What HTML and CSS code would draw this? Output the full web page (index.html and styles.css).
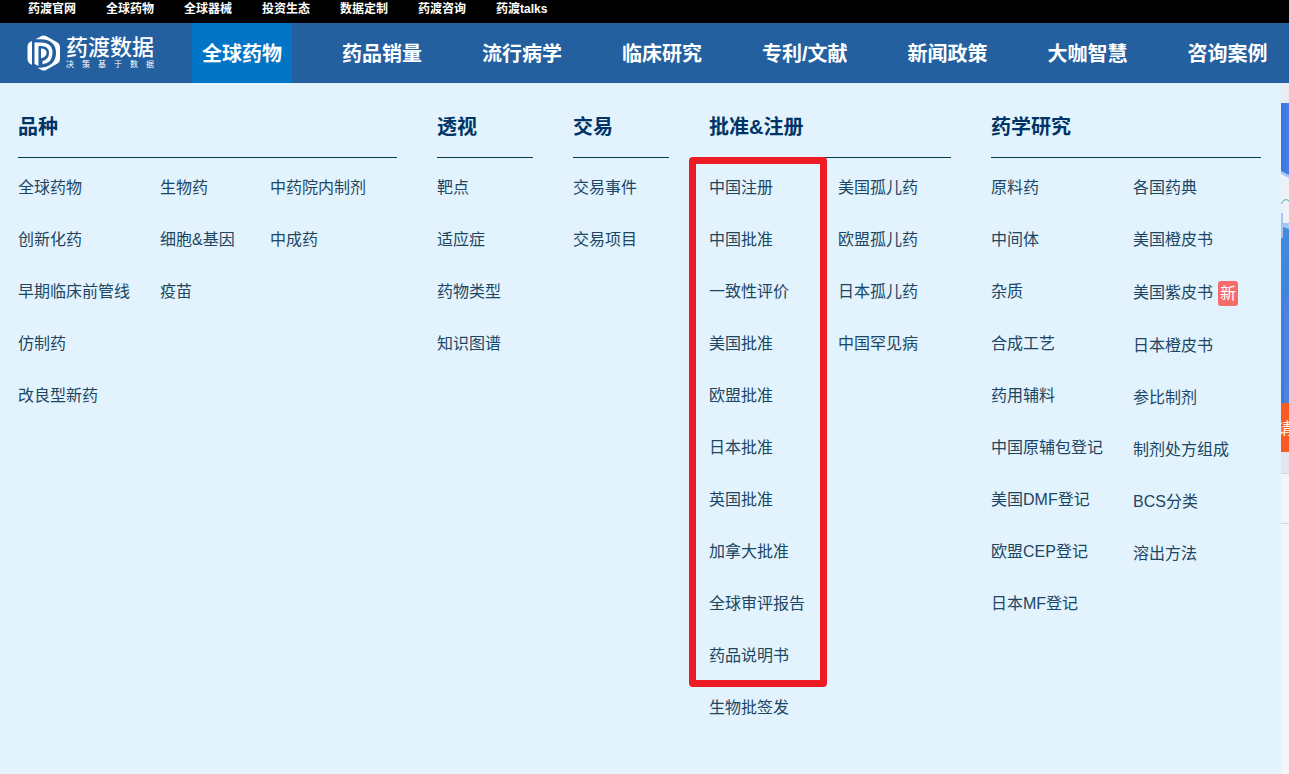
FILE: index.html
```html
<!DOCTYPE html>
<html lang="zh-CN">
<head>
<meta charset="utf-8">
<title>药渡数据</title>
<link rel="stylesheet" href="styles.css">
</head>
<body>
<nav class="topbar" aria-label="站点">
  <a href="#">药渡官网</a>
  <a href="#">全球药物</a>
  <a href="#">全球器械</a>
  <a href="#">投资生态</a>
  <a href="#">数据定制</a>
  <a href="#">药渡咨询</a>
  <a href="#">药渡talks</a>
</nav>
<header class="header">
  <a class="logo" href="#">
    <svg class="logo-mark" viewBox="0 0 34 36" aria-hidden="true">
      <path fill="#fff" d="M5 6V30L2 28Q.5 26.500 .5 24V11.500Q.5 8.500 2.500 7.300Z"/>
      <path fill="#fff" d="M8.500 4.300 15 .7Q17 0 19 1L30.500 7.600Q33 9 33 12V24Q33 27 30.500 28.500L18.500 35.300Q16.500 36 14.500 35L10.500 32.700Q20 33 25 28.500Q29 24.500 29 18Q29 11 24.500 7.500Q20 4 13 4.300Z"/>
      <path fill="#fff" d="M7.500 7.500H14Q25.500 7.500 25.500 18Q25.500 28 15.500 29.300V26Q22 24.500 22 18Q22 11 14 11H11.500V31L7.500 29Z"/>
      <path fill="#fff" d="M14 13.500Q19.500 13.500 19.500 18Q19.500 22 14 23.200Z"/>
    </svg>
    <span class="logo-text">
      <span class="logo-name">药渡数据</span>
      <span class="logo-slogan"><span>决</span><span>策</span><span>基</span><span>于</span><span>数</span><span>据</span></span>
    </span>
  </a>
  <nav class="main-nav" aria-label="主导航">
    <a class="active" href="#">全球药物</a>
    <a href="#">药品销量</a>
    <a href="#">流行病学</a>
    <a href="#">临床研究</a>
    <a href="#">专利/文献</a>
    <a href="#">新闻政策</a>
    <a href="#">大咖智慧</a>
    <a href="#">咨询案例</a>
  </nav>
</header>
<main class="content">
  <div class="menu">
    <section>
      <h2>品种</h2>
      <div class="lists lists-variety">
        <ul>
          <li><a href="#">全球药物</a></li>
          <li><a href="#">创新化药</a></li>
          <li><a href="#">早期临床前管线</a></li>
          <li><a href="#">仿制药</a></li>
          <li><a href="#">改良型新药</a></li>
        </ul>
        <ul>
          <li><a href="#">生物药</a></li>
          <li><a href="#">细胞&amp;基因</a></li>
          <li><a href="#">疫苗</a></li>
        </ul>
        <ul>
          <li><a href="#">中药院内制剂</a></li>
          <li><a href="#">中成药</a></li>
        </ul>
      </div>
    </section>
    <section>
      <h2>透视</h2>
      <ul class="lists">
        <li><a href="#">靶点</a></li>
        <li><a href="#">适应症</a></li>
        <li><a href="#">药物类型</a></li>
        <li><a href="#">知识图谱</a></li>
      </ul>
    </section>
    <section>
      <h2>交易</h2>
      <ul class="lists">
        <li><a href="#">交易事件</a></li>
        <li><a href="#">交易项目</a></li>
      </ul>
    </section>
    <section>
      <h2>批准&amp;注册</h2>
      <div class="lists lists-approval">
        <div>
          <ul class="marked">
            <li><a href="#">中国注册</a></li>
            <li><a href="#">中国批准</a></li>
            <li><a href="#">一致性评价</a></li>
            <li><a href="#">美国批准</a></li>
            <li><a href="#">欧盟批准</a></li>
            <li><a href="#">日本批准</a></li>
            <li><a href="#">英国批准</a></li>
            <li><a href="#">加拿大批准</a></li>
            <li><a href="#">全球审评报告</a></li>
            <li><a href="#">药品说明书</a></li>
          </ul>
          <ul>
            <li><a href="#">生物批签发</a></li>
          </ul>
        </div>
        <ul>
          <li><a href="#">美国孤儿药</a></li>
          <li><a href="#">欧盟孤儿药</a></li>
          <li><a href="#">日本孤儿药</a></li>
          <li><a href="#">中国罕见病</a></li>
        </ul>
      </div>
    </section>
    <section>
      <h2>药学研究</h2>
      <div class="lists lists-research">
        <ul>
          <li><a href="#">原料药</a></li>
          <li><a href="#">中间体</a></li>
          <li><a href="#">杂质</a></li>
          <li><a href="#">合成工艺</a></li>
          <li><a href="#">药用辅料</a></li>
          <li><a href="#">中国原辅包登记</a></li>
          <li><a href="#">美国DMF登记</a></li>
          <li><a href="#">欧盟CEP登记</a></li>
          <li><a href="#">日本MF登记</a></li>
        </ul>
        <ul>
          <li><a href="#">各国药典</a></li>
          <li><a href="#">美国橙皮书</a></li>
          <li class="with-badge"><a href="#">美国紫皮书</a><span class="badge">新</span></li>
          <li><a href="#">日本橙皮书</a></li>
          <li><a href="#">参比制剂</a></li>
          <li><a href="#">制剂处方组成</a></li>
          <li><a href="#">BCS分类</a></li>
          <li><a href="#">溶出方法</a></li>
        </ul>
      </div>
    </section>
  </div>
  <aside class="page-edge">
    <svg class="banner" viewBox="0 0 8 300" preserveAspectRatio="none" aria-hidden="true">
      <defs>
        <linearGradient id="top" x1="0" y1="0" x2="1" y2="0"><stop offset="0" stop-color="#3579d8"/><stop offset="1" stop-color="#4c7ee9"/></linearGradient>
        <linearGradient id="low" x1="0" y1="0" x2="0" y2="1"><stop offset="0" stop-color="#438bdb"/><stop offset="1" stop-color="#3f78dc"/></linearGradient>
      </defs>
      <rect width="8" height="72" fill="url(#top)"/>
      <path d="M0 68 8 72V122H0Z" fill="#a9c9f5"/>
      <path d="M0 71 8 75V120H0Z" fill="#eef1f5"/>
      <path d="M0 101Q4 94 8 98" fill="none" stroke="#4bb8b0" stroke-width="1"/>
      <path d="M0 110H2V136H0Z" fill="#a8c3ef"/>
      <path d="M2 120 8 123V300H0V136L2 134Z" fill="url(#low)"/>
      <path d="M2 120 8 123V126L2 124Z" fill="#a9c9f5"/>
      <path d="M3 200Q3 194 8 194V300H3Z" fill="#4c83e3"/>
    </svg>
    <a class="apply" href="#">请</a>
    <div class="edge-gap"></div>
    <div class="edge-row"></div>
    <div class="edge-rest"></div>
  </aside>
</main>
</body>
</html>
```
FILE: styles.css
```css
* {
  box-sizing: border-box;
}

body {
  margin: 0;
  min-height: 100vh;
  display: flex;
  flex-direction: column;
  font-family: "Liberation Sans", "Noto Sans CJK SC", sans-serif;
  font-size: 16px;
  color: #1c4663;
}

a {
  color: inherit;
  text-decoration: none;
}

ul {
  list-style: none;
  margin: 0;
  padding: 0;
}

.topbar {
  display: flex;
  gap: 30px;
  padding: 0 28px 5px;
  background: #000;
  color: #fff;
  font-size: 12px;
  font-weight: 700;
  line-height: 18px;
}

.header {
  display: flex;
  gap: 38px;
  padding-left: 27px;
  background: #245f9f;
  color: #fff;
}

.logo {
  display: flex;
  align-items: center;
  gap: 5px;
}

.logo-mark {
  width: 34px;
  height: 36px;
}

.logo-text {
  display: flex;
  flex-direction: column;
}

.logo-name {
  font-size: 22px;
  font-weight: 500;
  line-height: 24px;
}

.logo-slogan {
  display: flex;
  justify-content: space-between;
  font-size: 8px;
  line-height: 10px;
}

.main-nav {
  display: flex;
  gap: 40px;
  font-size: 20px;
  font-weight: 700;
  line-height: 58px;
  white-space: nowrap;
}

.main-nav a {
  padding: 2px 10px 0;
}

.main-nav .active {
  background: #0274c6;
}

.content {
  flex: 1;
  display: flex;
}

.menu {
  flex: 1;
  display: grid;
  grid-template-columns: 379fr 96fr 96fr 242fr 270fr;
  gap: 40px;
  padding: 24px 20px 40px 18px;
  background: #e2f3fd;
  white-space: nowrap;
}

.menu h2 {
  margin: 0 0 4px;
  padding-bottom: 10px;
  border-bottom: 1px solid #033a4c;
  font-size: 20px;
  line-height: 40px;
  color: #003467;
}

.menu li {
  line-height: 52px;
}

.lists-variety,
.lists-approval,
.lists-research {
  display: grid;
  column-gap: 30px;
}

.lists-variety {
  grid-template-columns: 112px 80px 1fr;
}

.lists-approval {
  grid-template-columns: 99px 1fr;
}

.lists-research {
  grid-template-columns: 112px 1fr;
}

.marked {
  position: relative;
}

.marked::after {
  content: "";
  position: absolute;
  inset: -5px -19px -5px -20px;
  border: 7px solid #ed1c24;
  border-radius: 4px;
  pointer-events: none;
}

.menu .with-badge {
  display: flex;
  align-items: center;
  gap: 5px;
  line-height: 54px;
}

.badge {
  padding: 0 2px;
  border-radius: 3px;
  background: #f56c6c;
  color: #fff;
  line-height: 25px;
}

.page-edge {
  width: 8px;
  display: flex;
  flex-direction: column;
  padding-top: 20px;
  overflow: hidden;
  background: #e9ecf1;
}

.banner {
  display: block;
  width: 100%;
  height: 300px;
}

.apply {
  padding-top: 2px;
  background: #fb5a22;
  color: #fff;
  font-size: 16px;
  line-height: 47px;
  text-indent: -4px;
}

.edge-gap {
  height: 22px;
  background: #e4e7ee;
  border-bottom: 1px solid #d5d8dc;
}

.edge-row {
  height: 50px;
  background: #f5f5f6;
  border-bottom: 1px solid #d5d8dc;
}

.edge-rest {
  flex: 1;
  background: #f5f5f6;
}
```
